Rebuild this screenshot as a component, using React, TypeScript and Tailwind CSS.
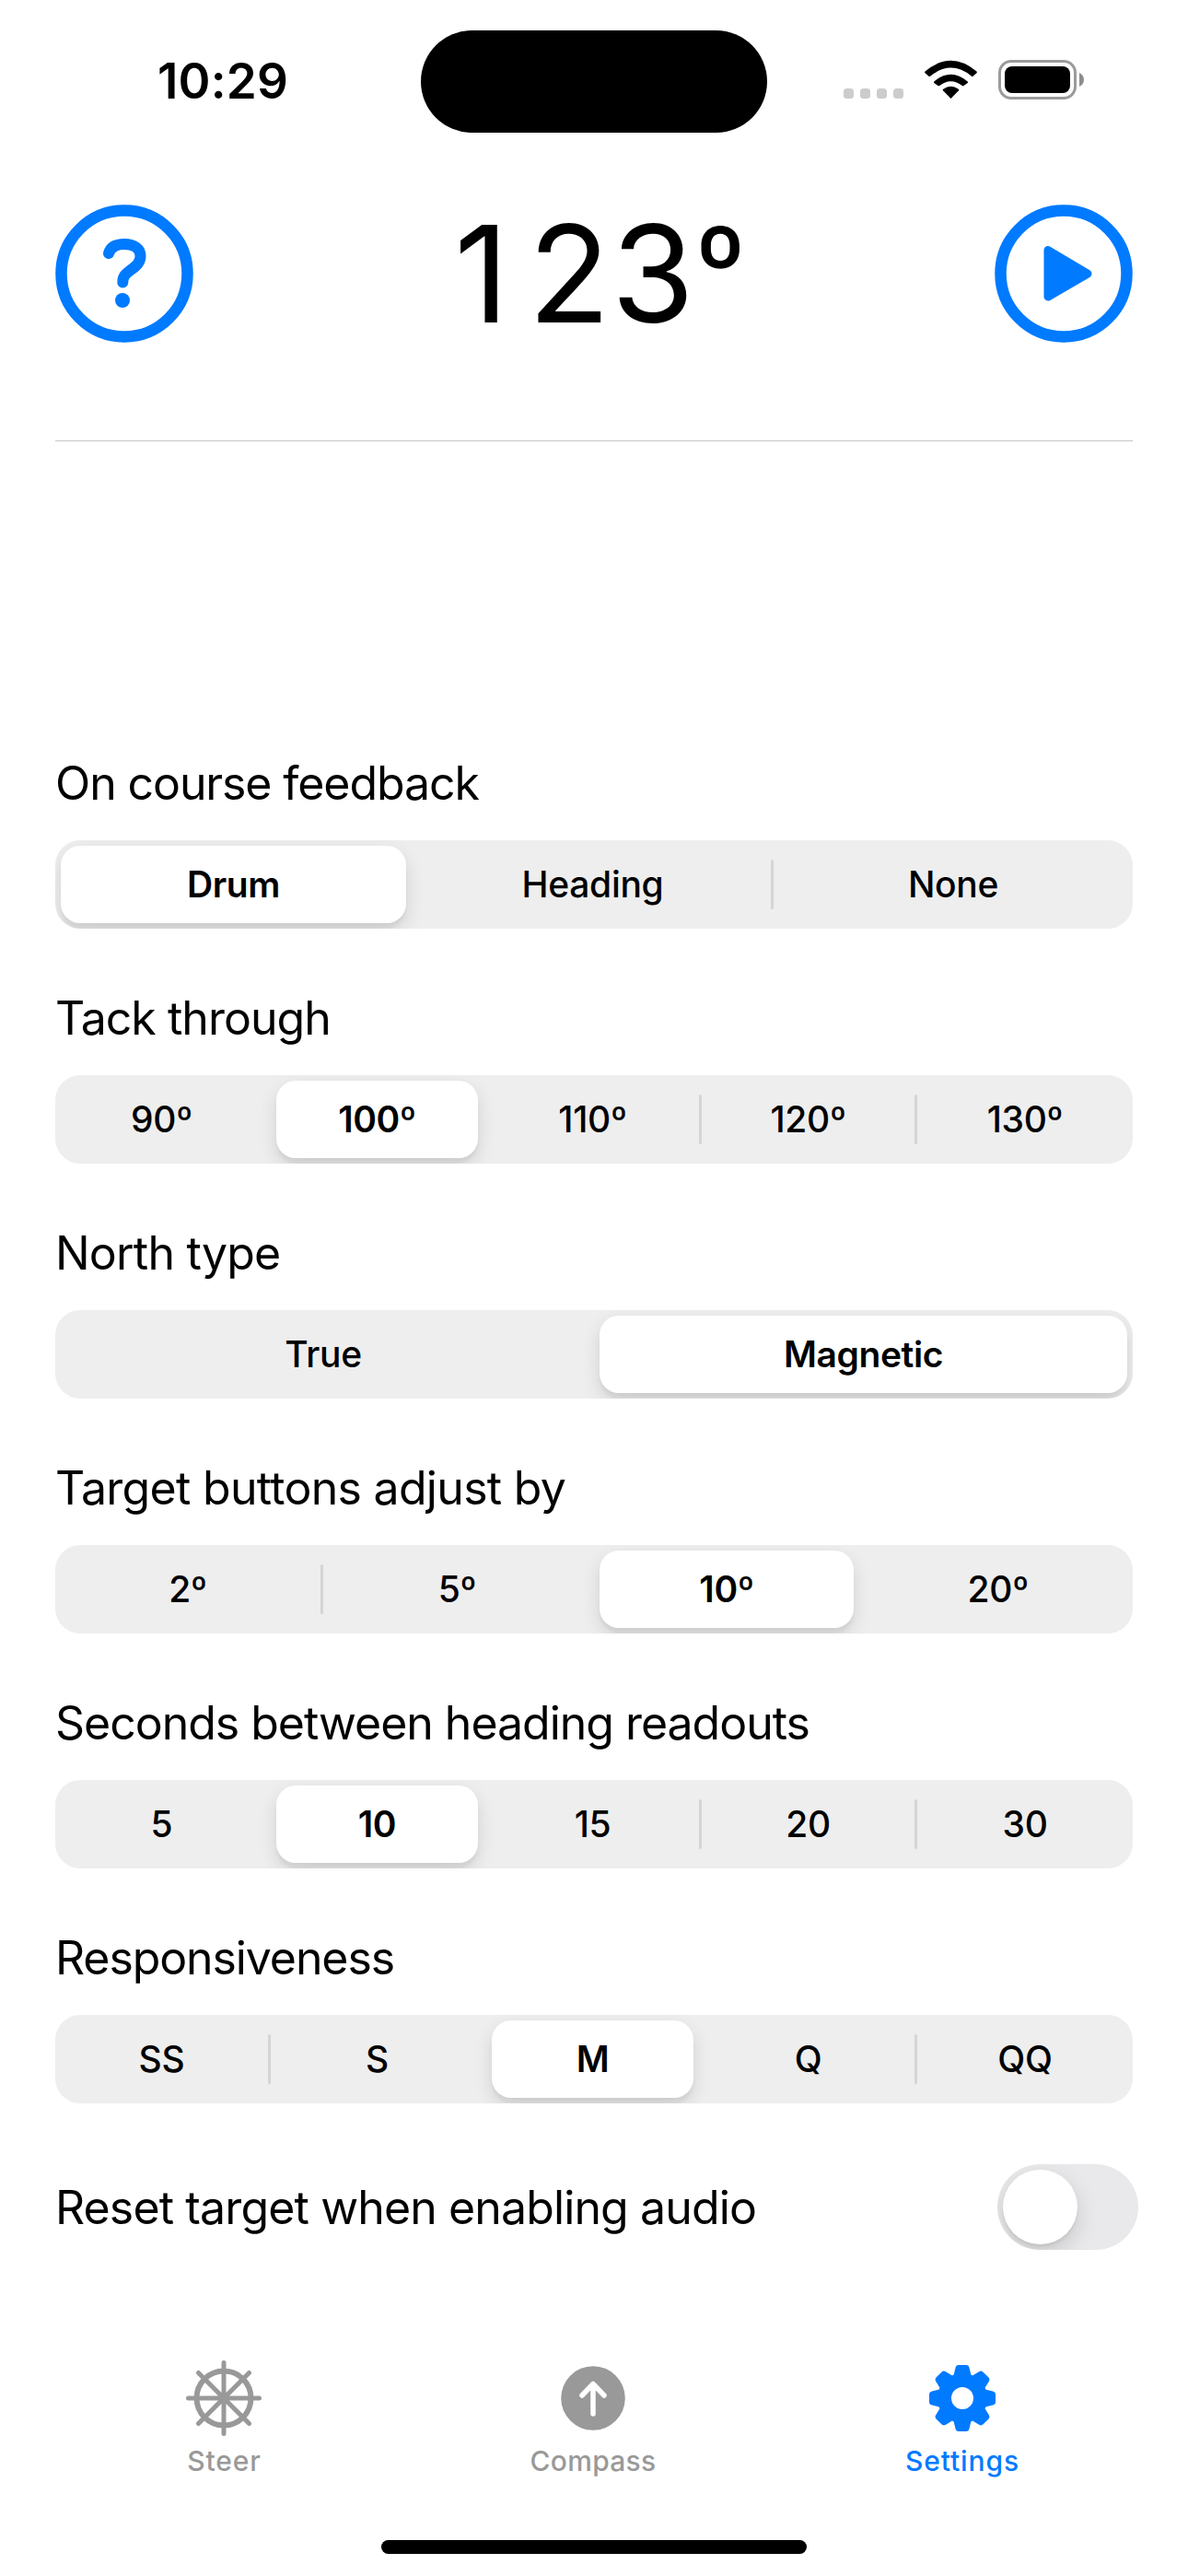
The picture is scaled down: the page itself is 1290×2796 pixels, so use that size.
import React from "react";

type SegmentedProps = {
  label: string;
  options: string[];
  selected: number;
  cell: string;
  gap?: string;
  labelTracking?: string;
};

// Each option owns its cell; the hairline sits in the gap between two unselected cells.
function Segmented({
  label,
  options,
  selected,
  cell,
  gap = "w-[15px]",
  labelTracking = "tracking-[-0.97px]",
}: SegmentedProps) {
  return (
    <section className="h-[255px]">
      <h2 className={`h-[96px] pt-[4px] text-[50px] leading-[60px] whitespace-nowrap ${labelTracking}`}>{label}</h2>
      <div className="flex h-[96px] overflow-hidden rounded-[27px] bg-[#eeeeee] p-[6px]">
        {options.map((o, i) => (
          <React.Fragment key={o}>
            {i > 0 && (
              <div className={`flex shrink-0 items-center pl-[6px] ${gap}`}>
                {i !== selected && i - 1 !== selected && <div className="h-[54px] w-[3px] rounded-full bg-[#d5d5d7]" />}
              </div>
            )}
            <button
              className={`pt-px text-[39px] ${i === options.length - 1 ? "min-w-0 flex-1" : `shrink-0 ${cell}`} ${
                i === selected
                  ? "rounded-[21px] bg-white font-[570] tracking-[-0.4px] shadow-[0_8px_20px_rgba(0,0,0,0.12),0_6px_3px_rgba(0,0,0,0.04)]"
                  : "font-[450] tracking-[-0.3px]"
              }`}
            >
              {o}
            </button>
          </React.Fragment>
        ))}
      </div>
    </section>
  );
}

function StatusBar() {
  return (
    <header className="flex h-[222px] items-start">
      <div className="w-[457px] pl-[171px] pt-[57px] text-[53px] font-semibold leading-[62px] tracking-[0.2px]">10:29</div>
      <div className="mt-[33px] h-[111px] w-[376px] shrink-0 rounded-full bg-black" />
      <svg className="ml-[82px] mt-[60px]" width="264" height="52" viewBox="915 60 264 52">
        <g fill="#cccccc">
          <rect x="916" y="96" width="11" height="11" rx="3.5" />
          <rect x="934" y="96" width="11" height="11" rx="3.5" />
          <rect x="952" y="96" width="11" height="11" rx="3.5" />
          <rect x="970" y="96" width="11" height="11" rx="3.5" />
        </g>
        <path d="M1032.500 107 L1024 98.300 Q1023.300 97.500 1024.200 96.800 Q1032.500 90.500 1040.800 96.800 Q1041.700 97.500 1041 98.300 Z" />
        <path d="M1014.300 88.500 Q1032.500 73 1050.700 88.500 Q1051.500 89.300 1050.700 90 L1046.200 93.200 Q1045.500 93.600 1044.800 93 Q1032.500 83.500 1020.200 93 Q1019.500 93.600 1018.800 93.200 L1014.300 90 Q1013.500 89.300 1014.300 88.500 Z" />
        <path d="M1004.500 77.500 Q1032.500 54 1060.500 77.500 Q1061.300 78.300 1060.500 79.200 L1056.500 82.700 Q1055.700 83.300 1055 82.700 Q1032.500 64.500 1010 82.700 Q1009.300 83.300 1008.500 82.700 L1004.500 79.200 Q1003.700 78.300 1004.500 77.500 Z" />
        <rect x="1085.500" y="66.500" width="82" height="40" rx="12.500" fill="none" stroke="#9b9b9b" strokeWidth="3" />
        <rect x="1091" y="72" width="71" height="29" rx="8" />
        <path d="M1172 79 Q1177 81.500 1177 86.500 Q1177 91.500 1172 94 Z" fill="#8d8d8d" />
      </svg>
    </header>
  );
}

function TitleBar() {
  return (
    <div className="mx-[60px] flex h-[257px] items-start justify-between border-b border-[#c6c6c8]">
      <svg width="150" height="150" viewBox="0 0 150 150" className="text-[#007aff]">
        <circle cx="75" cy="75" r="68.500" fill="none" stroke="currentColor" strokeWidth="12.500" />
        <path d="M58 53 C60 46 66 43 75 43 C86 43 92.500 48 92.500 56 C92.500 63 88 66.500 82 71 C76 75.500 73.300 78 73.300 84.500" fill="none" stroke="currentColor" strokeWidth="12" strokeLinecap="round" strokeLinejoin="round" />
        <circle cx="73" cy="104" r="8" fill="currentColor" />
      </svg>
      <h1 className="ml-[13px] mt-[-13px] flex text-[146px] leading-[176px]">
        <span className="tracking-[21px]">1</span>
        <span className="tracking-[1px]">23</span>
        <span className="-mt-[8px] text-[122px]">º</span>
      </h1>
      <svg width="150" height="150" viewBox="0 0 150 150" className="text-[#007aff]">
        <circle cx="75" cy="75" r="68.500" fill="none" stroke="currentColor" strokeWidth="12.500" />
        <path d="M58 49.500 L101 75 L58 100 Z" fill="currentColor" stroke="currentColor" strokeWidth="9" strokeLinejoin="round" />
      </svg>
    </div>
  );
}

const tooth = "M-9.500 -25 L-7.500 -33 Q-7 -36 -4 -36 L4 -36 Q7 -36 7.500 -33 L9.500 -25 Z";

function TabBar() {
  return (
    <nav className="flex h-[186px] pl-[42px] text-[30px] font-medium leading-[36px] tracking-[0.9px] text-[#999999]">
      <div className="flex w-[401px] flex-col items-center">
        <svg width="84" height="84" viewBox="-42 -42 84 84" fill="none" stroke="currentColor" strokeLinecap="round">
          <circle r="29.500" strokeWidth="6" />
          <path strokeWidth="5" d="M0 -38.500V38.500M-38.500 0H38.500M-27.500 -27.500L27.500 27.500M27.500 -27.500L-27.500 27.500" />
        </svg>
        <span className="mt-[8px] pl-[2px]">Steer</span>
      </div>
      <div className="flex w-[401px] flex-col items-center">
        <svg width="84" height="84" viewBox="-42 -42 84 84">
          <circle r="34.800" fill="currentColor" />
          <path d="M0 17V-15M-12 -3L0 -15.500L12 -3" fill="none" stroke="white" strokeWidth="5.500" strokeLinecap="round" strokeLinejoin="round" />
        </svg>
        <span className="mt-[8px] pl-px tracking-[0.3px]">Compass</span>
      </div>
      <div className="flex w-[401px] flex-col items-center text-[#007aff]">
        <svg width="84" height="84" viewBox="-42 -42 84 84" fill="currentColor">
          {[0, 45, 90, 135, 180, 225, 270, 315].map((a) => (
            <path key={a} d={tooth} transform={`rotate(${a})`} />
          ))}
          <circle r="19.500" fill="none" stroke="currentColor" strokeWidth="15" />
        </svg>
        <span className="mt-[8px] pl-px">Settings</span>
      </div>
    </nav>
  );
}

export default function App() {
  return (
    <div className="flex h-[2796px] w-[1290px] flex-col overflow-hidden bg-white font-['Inter',sans-serif] text-black">
      <StatusBar />
      <TitleBar />
      <main className="mt-[337px] px-[60px]">
        <Segmented label="On course feedback" options={["Drum", "Heading", "None"]} selected={0} cell="w-[375px]" labelTracking="tracking-[-1.1px]" />
        <Segmented label="Tack through" options={["90º", "100º", "110º", "120º", "130º"]} selected={1} cell="w-[219px]" />
        <Segmented label="North type" options={["True", "Magnetic"]} selected={1} cell="w-[570px]" labelTracking="tracking-[-0.8px]" />
        <Segmented label="Target buttons adjust by" options={["2º", "5º", "10º", "20º"]} selected={2} cell="w-[276px]" gap="w-[16.5px]" labelTracking="tracking-[-0.7px]" />
        <Segmented label="Seconds between heading readouts" options={["5", "10", "15", "20", "30"]} selected={1} cell="w-[219px]" labelTracking="tracking-[-1.02px]" />
        <Segmented label="Responsiveness" options={["SS", "S", "M", "Q", "QQ"]} selected={2} cell="w-[219px]" labelTracking="tracking-[-1.1px]" />
        <div className="mr-[-6px] mt-[3px] flex h-[93px] items-center justify-between">
          <span className="text-[50px] leading-[60px] tracking-[-0.87px] whitespace-nowrap">Reset target when enabling audio</span>
          <div className="h-[93px] w-[153px] overflow-hidden rounded-full bg-[#e9e9eb] p-[6px]">
            <div className="size-[81px] rounded-full bg-white shadow-[0_9px_24px_rgba(0,0,0,0.15),0_3px_3px_rgba(0,0,0,0.06)]" />
          </div>
        </div>
      </main>
      <div className="mt-[119px]">
        <TabBar />
      </div>
      <div className="mx-auto mt-[10px] h-[15px] w-[462px] shrink-0 rounded-full bg-black" />
    </div>
  );
}
